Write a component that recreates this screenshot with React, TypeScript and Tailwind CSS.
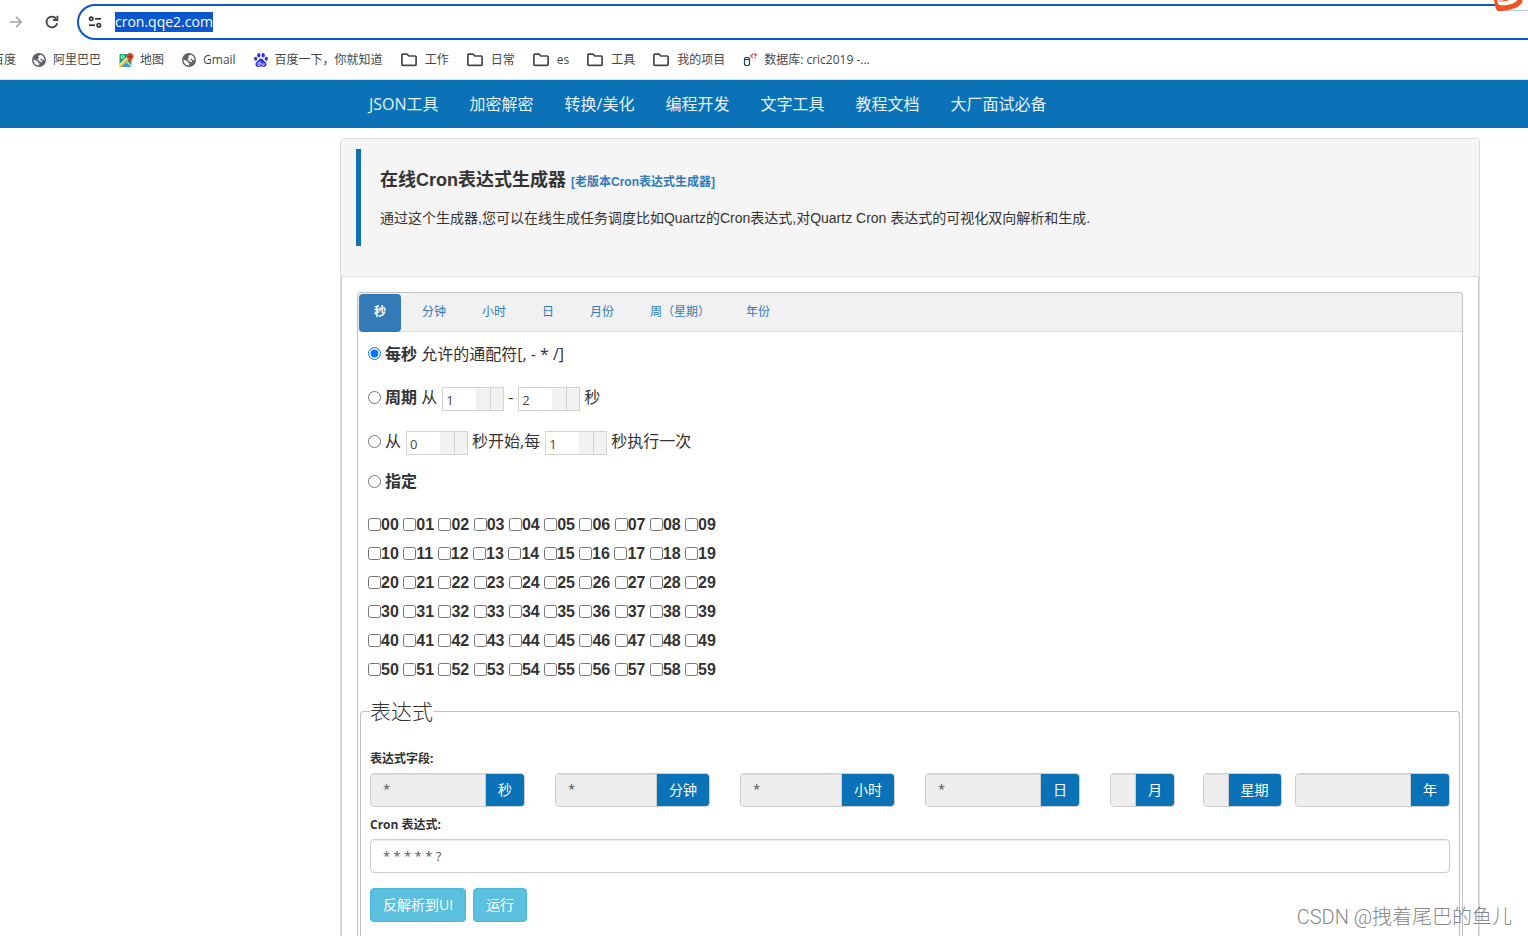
import React, { useState } from 'react';

interface Bookmark {
  label: string;
  icon: 'globe' | 'map' | 'baidu' | 'folder' | 'database';
}

interface CronField {
  label: string;
  value: string;
  span: string;
}

const bookmarks: Bookmark[] = [
  { label: '阿里巴巴', icon: 'globe' },
  { label: '地图', icon: 'map' },
  { label: 'Gmail', icon: 'globe' },
  { label: '百度一下，你就知道', icon: 'baidu' },
  { label: '工作', icon: 'folder' },
  { label: '日常', icon: 'folder' },
  { label: 'es', icon: 'folder' },
  { label: '工具', icon: 'folder' },
  { label: '我的项目', icon: 'folder' },
  { label: '数据库: cric2019 -...', icon: 'database' },
];

const navItems = ['JSON工具', '加密解密', '转换/美化', '编程开发', '文字工具', '教程文档', '大厂面试必备'];

const tabs = ['秒', '分钟', '小时', '日', '月份', '周（星期）', '年份'];

const cronFields: CronField[] = [
  { label: '秒', value: '*', span: 'col-span-2' },
  { label: '分钟', value: '*', span: 'col-span-2' },
  { label: '小时', value: '*', span: 'col-span-2' },
  { label: '日', value: '*', span: 'col-span-2' },
  { label: '月', value: '*', span: 'col-span-1' },
  { label: '星期', value: '?', span: 'col-span-1' },
  { label: '年', value: '', span: 'col-span-2' },
];

const secondRows = [0, 1, 2, 3, 4, 5];
const digits = [0, 1, 2, 3, 4, 5, 6, 7, 8, 9];

const BookmarkIcon: React.FC<{ icon: Bookmark['icon'] }> = ({ icon }) => {
  switch (icon) {
    case 'globe':
      return (
        <svg className="w-[14px] h-[14px] mr-[7px]" viewBox="0 0 14 14">
          <circle cx="7" cy="7" r="7" fill="#5f6368" />
          <path d="M1.6 6.6 L5.6 8.2 L5.8 9.6 L7.4 10 L7 12.6 C3.6 12.6 1.2 9.8 1.6 6.6 Z" fill="#fff" />
          <path d="M6 3 L8.8 1.8 C11 2.6 12.6 4.6 12.5 7.2 L10.6 7 L9.6 5.4 L8 6.6 L10.2 8 L9.8 9.2 L7.4 8.2 L5.4 6 L7.2 4.6 Z" fill="#fff" />
        </svg>
      );
    case 'map':
      return (
        <svg className="w-[15px] h-[14px] mr-[6px]" viewBox="0 0 15 14">
          <rect x="0.5" y="1" width="12" height="13" rx="1" fill="#1fa463" />
          <path d="M0.5 11 L9 3 L11 5 L2 14 H0.5 Z" fill="#fff" />
          <path d="M0.5 12.4 L8 5.6 L9.4 6.8 L2 14 H0.5 Z" fill="#fbc116" />
          <path d="M3 14 L7.2 9.6 L11.6 14 Z" fill="#4b8bf4" />
          <path d="M8.5 8.5 L12.5 12.6 V14 L7.4 9.6 Z" fill="#e8eaed" />
          <circle cx="3.6" cy="4" r="1.4" fill="none" stroke="#fff" strokeWidth="0.9" />
          <path d="M11 0 C13 0 14.6 1.5 14.6 3.6 C14.6 6 11.8 6.6 11.2 10 H10.8 C10.2 6.6 7.6 6 7.6 3.6 C7.6 1.5 9 0 11 0 Z" fill="#e24539" />
          <circle cx="11" cy="3.6" r="1.2" fill="#84251c" />
        </svg>
      );
    case 'baidu':
      return (
        <svg className="w-[14px] h-[14px] mr-[7px]" viewBox="0 0 14 14" fill="#2932e1">
          <ellipse cx="4.8" cy="2.2" rx="1.6" ry="2.2" />
          <ellipse cx="9.2" cy="2.2" rx="1.6" ry="2.2" />
          <ellipse cx="1.7" cy="5.8" rx="1.6" ry="2" />
          <ellipse cx="12.3" cy="5.8" rx="1.6" ry="2" />
          <path d="M7 5.4 C9 5.4 9.4 7.4 11.2 8.8 C13.4 10.4 12.8 14 9.8 14 C8.4 14 8 13.6 7 13.6 C6 13.6 5.6 14 4.2 14 C1.2 14 0.6 10.4 2.8 8.8 C4.6 7.4 5 5.4 7 5.4 Z" />
          <path d="M6 8.4 V12.3 H4.8 C3.2 12.3 3.2 9.9 4.8 9.9 H6 M7.8 9.9 V11.6 C7.8 12.3 8.2 12.3 10 12.3 V9.9" fill="none" stroke="#fff" strokeWidth="0.8" />
        </svg>
      );
    case 'folder':
      return (
        <svg className="w-4 h-4 mr-2" viewBox="0 0 16 16" fill="none" stroke="#474747" strokeWidth="1.7">
          <path d="M0.9 3 Q0.9 2.1 1.8 2.1 H6 L7.8 4 H14.2 Q15.1 4 15.1 4.9 V12.4 Q15.1 13.3 14.2 13.3 H1.8 Q0.9 13.3 0.9 12.4 Z" strokeLinejoin="round" />
        </svg>
      );
    case 'database':
      return (
        <svg className="w-[14px] h-[14px] mr-[7px]" viewBox="0 0 14 14" fill="none">
          <path d="M1.5 5.5 V11.5 L2.5 12.5 H5.5 L6.5 11.5 V5.5 L5.5 4.5 H2.5 L1.5 5.5 M2 6.5 H6" stroke="#0b4a5a" strokeWidth="1.2" />
          <path d="M10 0.8 L7.8 3 L10 5.2" stroke="#e0101a" strokeWidth="1.2" strokeDasharray="1.5 0.5" />
          <path d="M11 1 H13 V2.6 L12 3.4 M12 4.4 V5.6" stroke="#e0101a" strokeWidth="1.1" />
        </svg>
      );
    default:
      return null;
  }
};

const Spinner: React.FC<{ value: string; label: string }> = ({ value, label }) => (
  <span className="inline-flex w-[62px] h-6 mt-1 ml-[5px] mr-1 border border-[#d3d3d3] bg-[#f1f1f1]">
    <input
      type="text"
      aria-label={label}
      defaultValue={value}
      className="w-[33px] bg-white pl-[3px] pt-px text-[13px] text-[#444] outline-none"
    />
    <button type="button" aria-label="增加" className="w-[15px] border-r border-[#d3d3d3]" />
    <button type="button" aria-label="减少" className="flex-1" />
  </span>
);

const BrowserBar: React.FC = () => (
  <div className="relative overflow-hidden bg-white border-b border-[#dcdfe3]">
    <div className="flex items-center pt-1 pl-2">
      <button type="button" aria-label="前进" className="w-4 h-4 mr-5">
        <svg viewBox="0 0 16 16" fill="none" stroke="#a3a3a3" strokeWidth="1.6">
          <path d="M2 8 H13 M8 2.8 L13.2 8 L8 13.2" />
        </svg>
      </button>
      <button type="button" aria-label="刷新" className="w-4 h-4 mr-[17px]">
        <svg viewBox="0 0 16 16" fill="none" stroke="#474747" strokeWidth="1.8">
          <path d="M13.2 9.2 A5.4 5.4 0 1 1 12.2 4.6" />
          <path d="M13.4 1.8 V6 H9" />
        </svg>
      </button>
      <div className="flex flex-1 items-center h-9 pl-[9px] border-2 border-r-0 border-[#0b57d0] rounded-l-full">
        <svg className="w-[14px] h-[14px] mr-[13px]" viewBox="0 0 14 14" fill="none" stroke="#303030" strokeWidth="1.7">
          <circle cx="3.2" cy="3.8" r="1.7" />
          <path d="M7 3.8 H13" />
          <path d="M1 10.2 H7" />
          <circle cx="10.8" cy="10.2" r="1.7" />
        </svg>
        <input
          type="text"
          aria-label="地址"
          defaultValue="cron.qqe2.com"
          className="field-sizing-content h-5 pb-px bg-[#0b57d0] text-[14px] text-white outline-none"
        />
      </div>
    </div>
    <div className="flex items-center h-[39px] text-[12px] text-[#474747] whitespace-nowrap">
      <a href="#" className="-ml-2 mr-4">百度</a>
      {bookmarks.map((item) => (
        <a key={item.label} href="#" className="flex items-center mr-[18px]">
          <BookmarkIcon icon={item.icon} />
          {item.label}
        </a>
      ))}
    </div>
    <svg className="absolute top-0 right-0 w-9 h-3" viewBox="0 0 36 12">
      <rect x="3" y="0" width="33" height="11" fill="#fff" />
      <path d="M8 10.5 H36" stroke="#b5cbe8" />
      <path d="M2 0 H5.4 C5.6 2.6 6.2 4.6 7.6 5 C14 6 22 4.4 25.6 0 H30.5 C31 6 20 11 6 11 C4.2 11 3.2 7 2 0 Z" fill="#f4511e" />
      <path d="M7 1.4 C11 1.8 15 1.2 17 0 H13 C11 0.6 9 0.8 7 0.6 Z" fill="#f4511e" />
    </svg>
  </div>
);

const SecondsPanel: React.FC = () => (
  <div className="pl-[10px] text-[16px] leading-6 text-[#333]">
    <div className="flex items-center h-[43px]">
      <input type="radio" id="every" name="second" defaultChecked className="w-[13px] h-[13px] mr-1" />
      <label htmlFor="every">
        <b>每秒</b> 允许的通配符[, - * /]
      </label>
    </div>
    <div className="flex items-center h-11">
      <input type="radio" id="cycle" name="second" className="w-[13px] h-[13px] mr-1" />
      <label htmlFor="cycle">
        <b>周期</b> 从
      </label>
      <Spinner value="1" label="周期开始" />
      -
      <Spinner value="2" label="周期结束" />
      秒
    </div>
    <div className="flex items-center h-11">
      <input type="radio" id="start" name="second" className="w-[13px] h-[13px] mr-1" />
      <label htmlFor="start">从</label>
      <Spinner value="0" label="开始秒" />
      秒开始,每
      <Spinner value="1" label="间隔秒" />
      秒执行一次
    </div>
    <div className="flex items-center h-9">
      <input type="radio" id="appoint" name="second" className="w-[13px] h-[13px] mr-1" />
      <label htmlFor="appoint" className="font-bold">指定</label>
    </div>
    <div className="w-[348px] mt-[11px] font-['Liberation_Sans',sans-serif] font-bold">
      {secondRows.map((row) => (
        <div key={row} className="flex items-center justify-between h-[29px]">
          {digits.map((digit) => (
            <label key={digit} className="flex items-center">
              <input type="checkbox" className="w-[13px] h-[13px]" />
              {`${row}${digit}`}
            </label>
          ))}
        </div>
      ))}
    </div>
  </div>
);

const ExpressionForm: React.FC = () => (
  <fieldset className="mx-[2px] mt-3 px-[9px] flex-1 border border-b-0 border-[#c0c0c0] rounded-t text-[#333]">
    <legend className="text-[21px] leading-[30px] font-light">表达式</legend>
    <div className="mt-[23px] text-[12px] leading-5 font-bold">表达式字段:</div>
    <div className="grid grid-cols-12 -mx-[15px] mt-1">
      {cronFields.map((field) => (
        <div key={field.label} className={`${field.span} px-[15px]`}>
          <label className="flex h-[34px] min-w-max border border-[#ccc] rounded overflow-hidden">
            <input
              type="text"
              readOnly
              defaultValue={field.value}
              className="flex-1 w-0 min-w-[25px] px-3 bg-[#eee] border-r border-[#ccc] text-[13px] text-[#555] outline-none shadow-[inset_0_1px_1px_rgba(0,0,0,0.075)]"
            />
            <span className="px-3 bg-[#0b72b8] text-[14px] leading-8 text-white">{field.label}</span>
          </label>
        </div>
      ))}
    </div>
    <label htmlFor="cron" className="block mt-2 text-[12px] leading-5 font-bold">Cron 表达式:</label>
    <input
      id="cron"
      type="text"
      defaultValue="* * * * * ?"
      className="w-full h-[34px] mt-1 px-3 border border-[#ccc] rounded text-[13px] text-[#555] outline-none shadow-[inset_0_1px_1px_rgba(0,0,0,0.075)]"
    />
    <div className="flex gap-[7px] mt-[15px]">
      <button type="button" className="h-[34px] px-3 pb-px bg-[#5bc0de] border border-[#46b8da] rounded text-[14px] text-white">
        反解析到UI
      </button>
      <button type="button" className="h-[34px] px-3 pb-px bg-[#5bc0de] border border-[#46b8da] rounded text-[14px] text-white">
        运行
      </button>
    </div>
  </fieldset>
);

const App: React.FC = () => {
  const [activeTab, setActiveTab] = useState('秒');

  return (
    <div className="relative flex flex-col min-h-screen bg-white font-['Open_Sans','Noto_Sans_CJK_SC',sans-serif]">
      <BrowserBar />

      {/* Site navigation */}
      <nav className="flex items-center h-12 pl-[369px] gap-[31px] bg-[#0b72b8] text-[16px] text-[#e6f1f8] whitespace-nowrap">
        {navItems.map((item) => (
          <a key={item} href="#">{item}</a>
        ))}
      </nav>

      <main className="flex flex-col flex-1 mt-[10px] ml-[340px] mr-12 border border-b-0 border-[#ddd] rounded-t">
        {/* Heading */}
        <header className="pt-[10px] px-[15px] pb-[30px] bg-[#f5f5f5] border-b border-[#ddd] font-['Liberation_Sans','Noto_Sans_CJK_SC',sans-serif] text-[#333]">
          <div className="h-[97px] pl-[19px] pt-[19px] border-l-[5px] border-[#0b72b8]">
            <h1 className="text-[18px] leading-6 font-bold">
              在线Cron表达式生成器{' '}
              <a href="#" className="text-[12px] text-[#337ab7]">[老版本Cron表达式生成器]</a>
            </h1>
            <p className="mt-[14px] text-[14px] leading-5">
              通过这个生成器,您可以在线生成任务调度比如Quartz的Cron表达式,对Quartz Cron 表达式的可视化双向解析和生成.
            </p>
          </div>
        </header>

        <div className="flex flex-col flex-1 px-[15px] pt-[15px] border-x border-[#d3d3d3]">
          <div className="flex flex-col flex-1 border border-b-0 border-[#c5c0c0] rounded-t">
            {/* Tabs */}
            <div className="flex gap-[6px] h-[39px] pt-px pl-px bg-[#f1f1f1] border-b border-[#ddd] rounded-t">
              {tabs.map((tab) => (
                <button
                  key={tab}
                  type="button"
                  onClick={() => setActiveTab(tab)}
                  className={
                    tab === activeTab
                      ? 'h-[38px] px-[15px] pb-[2px] rounded bg-[#337ab7] text-[12px] font-bold text-white'
                      : 'h-[38px] px-[15px] pb-[2px] rounded text-[12px] text-[#337ab7]'
                  }
                >
                  {tab}
                </button>
              ))}
            </div>
            <SecondsPanel />
            <ExpressionForm />
          </div>
        </div>
      </main>

      <div className="absolute right-4 bottom-[3px] text-[20px] leading-8 font-light text-[#888] font-['Roboto','Noto_Sans_CJK_SC',sans-serif]">
        CSDN @拽着尾巴的鱼儿
      </div>
    </div>
  );
};

export default App;
